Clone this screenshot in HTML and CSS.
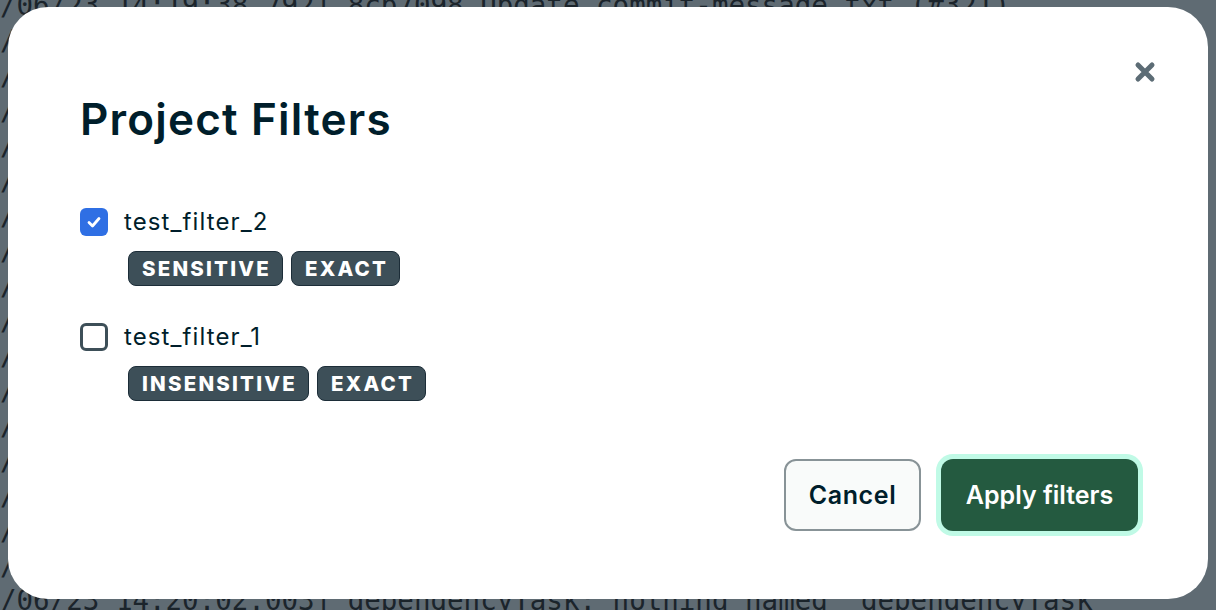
FILE: index.html
```html
<!DOCTYPE html>
<html lang="en">
<head>
<meta charset="utf-8">
<title>Project Filters</title>
<link rel="stylesheet" href="styles.css">
</head>
<body>
<div class="log">
  <div class="log-line">/06/23 14:19:38.792] 8cb7098 Update commit-message.txt (#321)</div>
  <div class="log-line">/</div>
  <div class="log-line">/</div>
  <div class="log-line">/</div>
  <div class="log-line">/</div>
  <div class="log-line">/</div>
  <div class="log-line">/</div>
  <div class="log-line">/</div>
  <div class="log-line">/</div>
  <div class="log-line">/</div>
  <div class="log-line">/</div>
  <div class="log-line">/</div>
  <div class="log-line">/</div>
  <div class="log-line">/</div>
  <div class="log-line">/</div>
  <div class="log-line">/</div>
  <div class="log-line">/</div>
  <div class="log-line">/06/23 14:20:02.003] dependencyTask: nothing named 'dependencyTask'</div>
</div>

<div class="overlay">
  <section class="modal" role="dialog" aria-labelledby="modal-title">
    <button class="close" type="button" aria-label="Close">
      <svg width="22" height="22" viewBox="0 0 22 22" aria-hidden="true">
        <path d="M4 4 L18 18 M18 4 L4 18" stroke="#5c6c75" stroke-width="5" stroke-linecap="round"/>
      </svg>
    </button>

    <h1 class="title" id="modal-title">Project Filters</h1>

    <ul class="filters">
      <li class="filter">
        <label class="filter-row">
          <span class="check checked">
            <svg width="18" height="18" viewBox="0 0 18 18" aria-hidden="true">
              <path d="M4 9.5 L7.5 13 L14 5.5" fill="none" stroke="#fff" stroke-width="2.8" stroke-linecap="round" stroke-linejoin="round"/>
            </svg>
          </span>
          <span class="filter-name">test_filter_2</span>
        </label>
        <div class="badges">
          <span class="badge">SENSITIVE</span>
          <span class="badge">EXACT</span>
        </div>
      </li>
      <li class="filter">
        <label class="filter-row">
          <span class="check"></span>
          <span class="filter-name">test_filter_1</span>
        </label>
        <div class="badges">
          <span class="badge">INSENSITIVE</span>
          <span class="badge">EXACT</span>
        </div>
      </li>
    </ul>

    <footer class="actions">
      <button class="btn btn-cancel" type="button">Cancel</button>
      <button class="btn btn-primary" type="button">Apply filters</button>
    </footer>
  </section>
</div>
</body>
</html>
```

FILE: styles.css
```css
* { box-sizing: border-box; }

html, body {
  margin: 0;
  padding: 0;
  width: 1216px;
  height: 610px;
  overflow: hidden;
}

body {
  background: #5f6b73;
}

.log {
  margin-top: -12px;
  display: flex;
  flex-direction: column;
  align-items: flex-start;
  font-family: "DejaVu Sans Mono", "Liberation Mono", monospace;
  font-size: 27.5px;
  line-height: 35px;
  color: #1b242b;
}

.log-line {
  white-space: pre;
  height: 35px;
}

.overlay {
  position: fixed;
  inset: 0;
}

.modal {
  position: absolute;
  left: 8px;
  top: 7px;
  width: 1200px;
  height: 592px;
  background: #ffffff;
  border-radius: 40px;
  padding: 86px 70px 68px 72px;
  display: flex;
  flex-direction: column;
  font-family: "Inter", "Lato", sans-serif;
  color: #001e2b;
}

.close {
  position: absolute;
  top: 54px;
  right: 52px;
  width: 22px;
  height: 22px;
  padding: 0;
  border: 0;
  background: transparent;
  display: flex;
}

.title {
  margin: 0;
  font-size: 44px;
  line-height: 52px;
  font-weight: 600;
  letter-spacing: 1.2px;
}

.filters {
  list-style: none;
  margin: 62px 0 0 0;
  padding: 0;
  display: flex;
  flex-direction: column;
  gap: 36px;
}

.filter {
  display: flex;
  flex-direction: column;
  gap: 14px;
}

.filter-row {
  display: flex;
  align-items: center;
  gap: 16px;
  height: 30px;
}

.check {
  width: 28px;
  height: 28px;
  border-radius: 6px;
  border: 3px solid #3d4f58;
  display: flex;
  align-items: center;
  justify-content: center;
  flex: none;
}

.check.checked {
  border: 0;
  background: #2f6fe4;
}

.filter-name {
  font-size: 24px;
  line-height: 30px;
  letter-spacing: 1.1px;
}

.badges {
  display: flex;
  gap: 8px;
  padding-left: 48px;
}

.badge {
  height: 35px;
  padding: 0 11px 0 13px;
  border-radius: 8px;
  background: #3d4f58;
  border: 1.5px solid #1c2d38;
  color: #ffffff;
  font-size: 20.5px;
  font-weight: 800;
  letter-spacing: 2.2px;
  display: flex;
  align-items: center;
}

.actions {
  margin-top: auto;
  display: flex;
  justify-content: flex-end;
  gap: 20px;
}

.btn {
  height: 72px;
  border-radius: 12px;
  font-family: "Inter", "Lato", sans-serif;
  font-size: 25px;
  font-weight: 600;
  padding: 0;
}

.btn-cancel {
  width: 137px;
  background: #f9fbfa;
  border: 2px solid #889397;
  color: #001e2b;
  letter-spacing: 0.6px;
}

.btn-primary {
  width: 197px;
  background: #245a40;
  border: 0;
  color: #ffffff;
  box-shadow: 0 0 0 5px #c0fae6;
}
```
